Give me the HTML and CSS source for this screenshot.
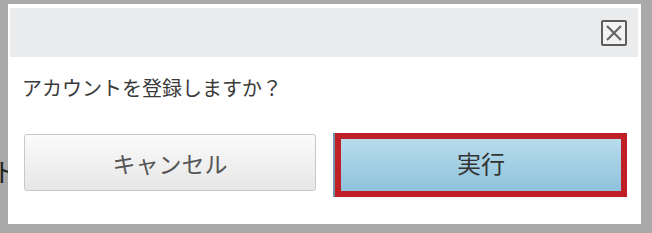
FILE: index.html
```html
<!DOCTYPE html>
<html lang="ja">
<head>
    <meta charset="UTF-8">
    <title>アカウント登録</title>
    <link rel="stylesheet" href="styles.css">
</head>
<body>
    <div class="backdrop">
        <span class="behind-text">ト</span>
        <div class="dialog">
            <div class="dialog-header">
                <button class="close-btn" aria-label="閉じる">
                    <svg width="18" height="18" viewBox="0 0 18 18">
                        <path d="M2 2 L16 16 M16 2 L2 16" stroke="#666" stroke-width="2.2" fill="none"/>
                    </svg>
                </button>
            </div>
            <p class="message">アカウントを登録しますか？</p>
            <div class="actions">
                <button class="btn btn-cancel">キャンセル</button>
                <button class="btn btn-ok">実行</button>
            </div>
        </div>
    </div>
</body>
</html>
```

FILE: styles.css
```css
/* General */
body {
    margin: 0;
    padding: 0;
    background-color: #a9a9a9;
    font-family: "Noto Sans CJK JP", "Noto Sans", sans-serif;
    color: #333;
}

.backdrop {
    position: relative;
    width: 652px;
    height: 233px;
    padding-top: 4px;
    padding-left: 8px;
    box-sizing: border-box;
    background-color: #a9a9a9;
}

.behind-text {
    position: absolute;
    left: -8px;
    top: 158px;
    font-size: 26px;
    line-height: 26px;
    color: #222;
}

/* Dialog */
.dialog {
    position: relative;
    width: 633px;
    height: 220px;
    background-color: #fff;
    padding: 4px 3px 0 2px;
    box-sizing: border-box;
}

.dialog-header {
    height: 49px;
    background-color: #ebecee;
    display: flex;
    justify-content: flex-end;
    align-items: flex-start;
    padding: 12px 11px 0 0;
    box-sizing: border-box;
}

.close-btn {
    width: 26px;
    height: 26px;
    padding: 0;
    border: 2px solid #5c5c5c;
    border-radius: 2px;
    background-color: #f2f2f2;
    display: flex;
    align-items: center;
    justify-content: center;
    cursor: pointer;
}

.message {
    margin: 19px 0 0 12px;
    font-size: 20px;
    line-height: 24px;
    color: #3a3a3a;
}

/* Buttons */
.actions {
    display: flex;
    align-items: flex-start;
    margin-top: 33px;
    padding-left: 14px;
    gap: 19px;
}

.btn {
    font-family: inherit;
    font-size: 23px;
    cursor: pointer;
    box-sizing: border-box;
}

.btn-cancel {
    width: 292px;
    height: 57px;
    margin-top: 1px;
    border: 1px solid #c8c8c8;
    border-radius: 3px;
    background: linear-gradient(#fbfbfb, #e6e6e6);
    color: #555;
}

.btn-ok {
    width: 292px;
    height: 64px;
    border: 6px solid #c01f27;
    border-radius: 0;
    background: linear-gradient(#b8dcec, #8ec3dc);
    box-shadow: -2px 0 0 #7094ad;
    color: #333;
    font-size: 24px;
    padding-bottom: 6px;
}
```
